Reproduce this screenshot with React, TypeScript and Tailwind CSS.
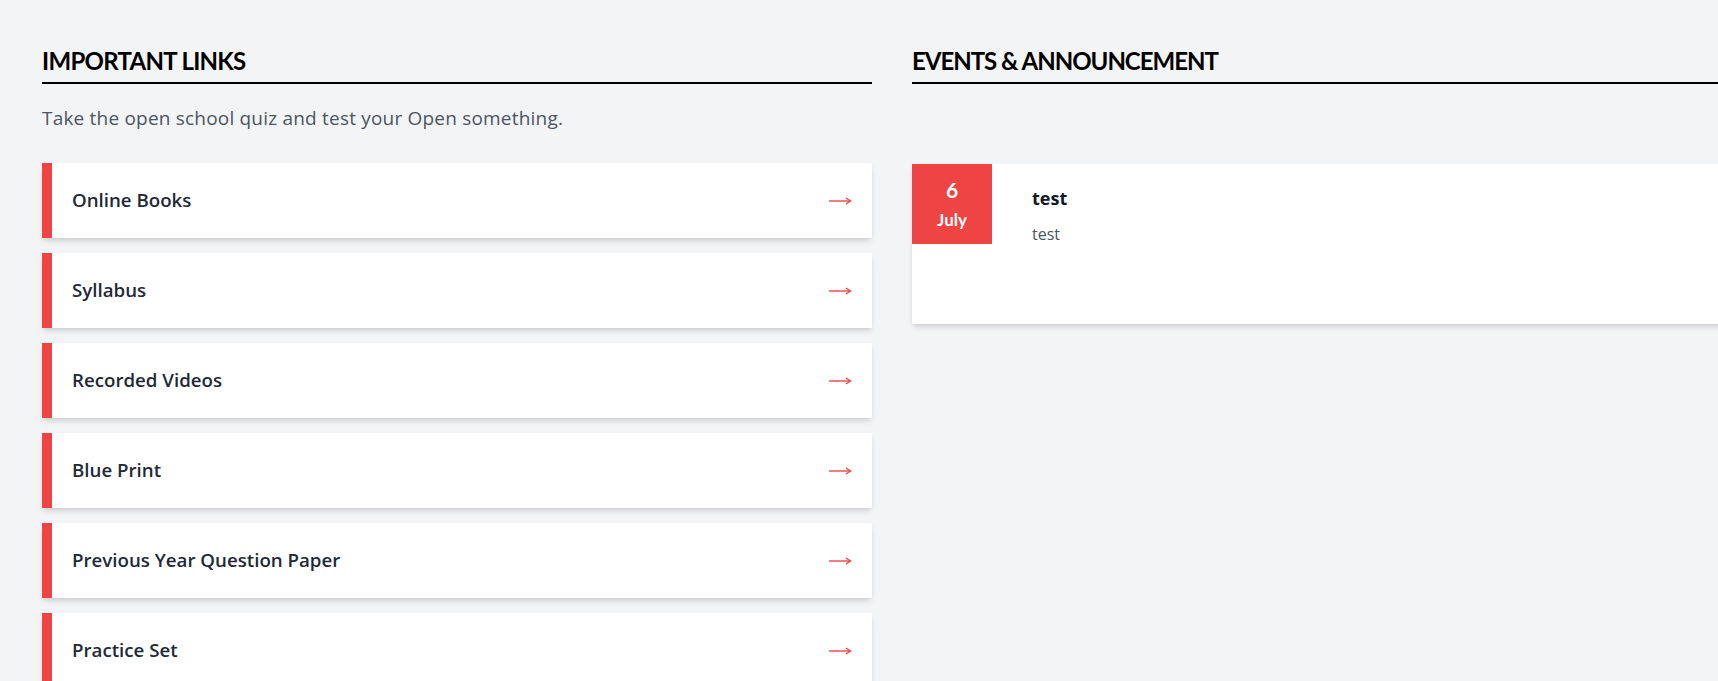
import React from "react";

const links = [
  "Online Books",
  "Syllabus",
  "Recorded Videos",
  "Blue Print",
  "Previous Year Question Paper",
  "Practice Set",
];

function Arrow() {
  return (
    <svg width="24" height="10" viewBox="0 0 24 10" fill="none" className="shrink-0">
      <path d="M1 5H22.5" stroke="#ef4444" strokeWidth="1.4" />
      <path d="M18 2L22.5 5L18 8" stroke="#ef4444" strokeWidth="1.4" fill="none" />
    </svg>
  );
}

export default function App() {
  return (
    <div className="min-h-screen w-full overflow-hidden bg-[#f3f4f6] font-['Open_Sans',sans-serif]">
      <div className="flex w-[1742px] gap-[40px] pl-[42px] pt-[46px]">
        <section className="w-[830px] shrink-0">
          <h2 className="border-b-2 border-black pb-[6px] font-['Lato',sans-serif] text-[24px] font-bold leading-[30px] tracking-[-0.7px] text-black">
            IMPORTANT LINKS
          </h2>
          <p className="mt-[20px] text-[19px] leading-[28px] tracking-[0.2px] text-[#4b5563]">
            Take the open school quiz and test your Open something.
          </p>
          <div className="mt-[31px] flex flex-col gap-[15px]">
            {links.map((l) => (
              <div
                key={l}
                className="flex h-[75px] items-center justify-between border-l-[10px] border-[#ef4444] bg-white pl-[20px] pr-[20px] shadow-[0_4px_6px_-1px_rgba(0,0,0,0.12),0_2px_4px_-2px_rgba(0,0,0,0.1)]"
              >
                <span className="text-[18.7px] font-semibold text-[#1f2937]">{l}</span>
                <Arrow />
              </div>
            ))}
          </div>
        </section>
        <section className="w-[830px] shrink-0">
          <h2 className="border-b-2 border-black pb-[6px] font-['Lato',sans-serif] text-[24px] font-bold leading-[30px] tracking-[-1px] text-black">
            EVENTS &amp; ANNOUNCEMENT
          </h2>
          <div className="mt-[80px] flex h-[160px] items-start bg-white shadow-[0_4px_6px_-1px_rgba(0,0,0,0.12),0_2px_4px_-2px_rgba(0,0,0,0.1)]">
            <div className="flex h-[80px] w-[80px] shrink-0 flex-col items-center justify-center bg-[#ef4444] font-['Lato',sans-serif] text-white">
              <span className="text-[21px] font-bold leading-[28px]">6</span>
              <span className="mt-[3px] text-[17px] font-bold leading-[26px]">July</span>
            </div>
            <div className="pl-[40px] pt-[22px]">
              <div className="text-[18px] font-bold leading-[24px] text-[#111827]">test</div>
              <div className="mt-[13px] text-[16px] leading-[22px] text-[#4b5563]">test</div>
            </div>
          </div>
        </section>
      </div>
    </div>
  );
}
